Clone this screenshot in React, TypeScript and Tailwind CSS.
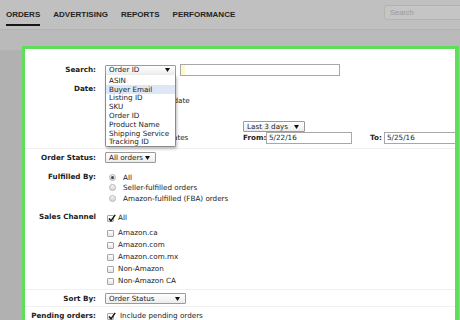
import React from "react";

const form = { fontFamily: '"DejaVu Sans", Verdana, sans-serif' };

function Arrow() {
  return (
    <svg width="5" height="4" viewBox="0 0 5 4" className="shrink-0">
      <path d="M0 0 H5 L2.5 4 Z" fill="#111" />
    </svg>
  );
}

function Select({ value, width }: { value: string; width: number }) {
  return (
    <div
      className="h-[11px] flex items-center justify-between pl-[3px] pr-[5px] border border-[#9a9a9a] rounded-[1px] bg-[linear-gradient(#ffffff,#ececec)] text-[7.2px] leading-none text-[#222] shrink-0"
      style={{ width }}
    >
      <span>{value}</span>
      <Arrow />
    </div>
  );
}

function Check({ checked }: { checked?: boolean }) {
  return (
    <div className="w-[7px] h-[7px] border border-[#a5a5a5] rounded-[1px] bg-[linear-gradient(#ffffff,#e4e4e4)] relative shrink-0">
      {checked && (
        <svg width="8" height="8" viewBox="0 0 8 8" className="absolute left-[0px] top-[-2px]">
          <path d="M1 4.5 L3 6.8 L7.2 0.8" stroke="#111" strokeWidth="1.4" fill="none" />
        </svg>
      )}
    </div>
  );
}

function Radio({ checked }: { checked?: boolean }) {
  return (
    <div className="w-[7px] h-[7px] rounded-full border border-[#b5b5b5] bg-[linear-gradient(#f4f4f4,#d6d6d6)] flex items-center justify-center shrink-0">
      {checked && <div className="w-[3px] h-[3px] rounded-full bg-[#444]" />}
    </div>
  );
}

function Label({ children, className = "" }: { children: React.ReactNode; className?: string }) {
  return (
    <div className={`w-[71px] mr-[9px] shrink-0 flex items-center justify-end font-bold text-[7.2px] leading-none text-[#222] ${className}`}>
      {children}
    </div>
  );
}

function Line() {
  return <div className="h-px bg-[#f1f1f1] mr-[-4px]" />;
}

const dropItems = ["ASIN", "Buyer Email", "Listing ID", "SKU", "Order ID", "Product Name", "Shipping Service", "Tracking ID"];

export default function App() {
  return (
    <div className="w-[460px] h-[320px] overflow-hidden bg-[#bababa] flex flex-col">
      {/* top nav */}
      <div
        className="h-[30px] shrink-0 bg-[#c0c0c0] border-b border-[#b2b2b2] flex pl-[6px] gap-[13px] text-[8px] font-bold leading-[8px] text-[#232323]"
        style={{ fontFamily: '"Liberation Sans", Arial, sans-serif' }}
      >
        <div className="flex flex-col pt-[11px]">
          <span>ORDERS</span>
          <div className="mt-[5px] h-[2px] bg-[#151515]" />
        </div>
        <div className="pt-[11px]">ADVERTISING</div>
        <div className="pt-[11px]">REPORTS</div>
        <div className="pt-[11px]">PERFORMANCE</div>
        <div className="ml-auto mt-[5px] w-[90px] h-[15px] mr-[-14px] rounded-[3px] border border-[#b3b3b3] bg-[#c5c5c5] text-[7.5px] font-normal text-[#9a9a9a] flex items-center pl-[5px]">
          Search
        </div>
      </div>

      <div className="flex flex-1 pt-[16px]">
        <div className="w-[22px] shrink-0 bg-[#b1b1b1] mt-[4px]" />
        <div
          className="w-[437px] shrink-0 border-[3px] border-r-[4px] border-b-0 border-[#5ddf5a] bg-white overflow-hidden text-[7.2px] leading-none text-[#222]"
          style={form}
        >
          <div className="flex flex-col pt-[15px]">
            {/* Search */}
            <div className="flex h-[12px]">
              <Label>Search:</Label>
              <div className="relative flex items-center gap-[4px]">
                <Select value="Order ID" width={71} />
                <div className="w-[160px] h-[12px] border border-[#a8a8a8] bg-[linear-gradient(90deg,#fdf8d0_0px,#fdf8d0_4px,#ffffff_4px)]" />
                <div className="absolute left-0 top-[11px] w-[71px] z-10 border border-[#8a8a8a] border-t-0 bg-white rounded-b-[2px] shadow-[1px_2px_3px_rgba(0,0,0,0.25)] pt-[1px]">
                  {dropItems.map((it) => (
                    <div
                      key={it}
                      className={`h-[8.8px] flex items-center pl-[3px] whitespace-nowrap ${it === "Buyer Email" ? "bg-[#dde7f5]" : ""}`}
                    >
                      {it}
                    </div>
                  ))}
                </div>
              </div>
            </div>

            {/* Date */}
            <div className="flex mt-[7px]">
              <Label className="h-[12px] self-start">Date:</Label>
              <div className="flex flex-col">
                <div className="h-[12px] flex items-center pl-[5px]">
                  <Radio checked />
                </div>
                <div className="h-[12px] flex items-center gap-[7px] pl-[5px]">
                  <Radio />
                  <span>Last updated date</span>
                </div>
                <div className="h-[11px] mt-[14px] flex items-center">
                  <div className="w-[138px] flex items-center pl-[5px]">
                    <Radio checked />
                  </div>
                  <Select value="Last 3 days" width={62} />
                </div>
                <div className="h-[12px] flex items-center">
                  <div className="w-[138px] flex items-center gap-[7px] pl-[5px]">
                    <Radio />
                    <span>Using exact dates</span>
                  </div>
                  <span className="font-bold w-[23px]">From:</span>
                  <div className="w-[86px] h-[12px] border border-[#a8a8a8] flex items-center pl-[2px]">5/22/16</div>
                  <span className="font-bold ml-[18px] w-[14px]">To:</span>
                  <div className="w-[80px] h-[12px] border border-[#a8a8a8] flex items-center pl-[2px]">5/25/16</div>
                </div>
              </div>
            </div>

            <div className="mt-[4px]"><Line /></div>

            {/* Order status */}
            <div className="flex h-[11px] mt-[3px]">
              <Label>Order Status:</Label>
              <Select value="All orders" width={51} />
            </div>

            {/* Fulfilled by */}
            <div className="flex mt-[9px]">
              <Label className="h-[10px] self-start">Fulfilled By:</Label>
              <div className="flex flex-col">
                {[
                  ["All", true],
                  ["Seller-fulfilled orders", false],
                  ["Amazon-fulfilled (FBA) orders", false],
                ].map(([t, c]) => (
                  <div key={t as string} className="h-[10.5px] flex items-center gap-[7px] pl-[4px]">
                    <Radio checked={c as boolean} />
                    <span>{t}</span>
                  </div>
                ))}
              </div>
            </div>

            {/* Sales channel */}
            <div className="flex mt-[8.5px]">
              <Label className="h-[9px] self-start">Sales Channel</Label>
              <div className="flex flex-col">
                <div className="h-[12px] flex items-center gap-[4px] pl-[2px]">
                  <Check checked />
                  <span>All</span>
                </div>
                <div className="mt-[3px] flex flex-col">
                  {["Amazon.ca", "Amazon.com", "Amazon.com.mx", "Non-Amazon", "Non-Amazon CA"].map((t) => (
                    <div key={t} className="h-[12px] flex items-center gap-[4px] pl-[2px]">
                      <Check />
                      <span>{t}</span>
                    </div>
                  ))}
                </div>
              </div>
            </div>

            <div className="mt-[2px]"><Line /></div>

            {/* Sort by */}
            <div className="flex h-[11px] mt-[3px]">
              <Label>Sort By:</Label>
              <Select value="Order Status" width={81} />
            </div>

            <div className="mt-[2px]"><Line /></div>

            {/* Pending */}
            <div className="flex h-[10px] mt-[4px]">
              <Label>Pending orders:</Label>
              <div className="flex items-center gap-[6px] pl-[2px]">
                <Check checked />
                <span>Include pending orders</span>
              </div>
            </div>
          </div>
        </div>
      </div>
    </div>
  );
}
